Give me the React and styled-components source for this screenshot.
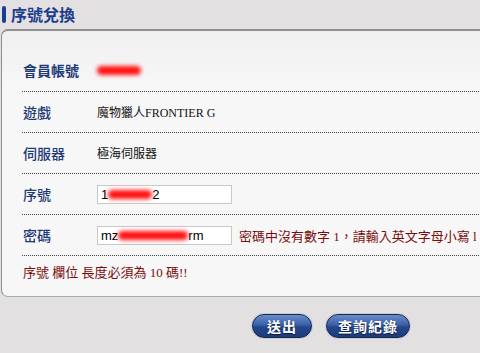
import React from "react";
import styled, { createGlobalStyle } from "styled-components";

const GlobalStyle = createGlobalStyle`
  html, body {
    margin: 0;
    padding: 0;
    background: #e2e0e0;
    font-family: "Liberation Serif", "Noto Sans CJK TC", serif;
    overflow: hidden;
  }
`;

function App() {
  return (
    <Page>
      <GlobalStyle />
      <TitleBar>
        <TitleMark />
        <Title>序號兌換</Title>
      </TitleBar>
      <Panel>
        <Row>
          <Label $strong>會員帳號</Label>
          <Value>
            <Blur $w={44} />
          </Value>
        </Row>
        <Row>
          <Label>遊戲</Label>
          <Value>魔物獵人FRONTIER G</Value>
        </Row>
        <Row>
          <Label>伺服器</Label>
          <Value>極海伺服器</Value>
        </Row>
        <Row>
          <Label>序號</Label>
          <Value>
            <Field>
              1<Blur $w={44} />2
            </Field>
          </Value>
        </Row>
        <Row>
          <Label>密碼</Label>
          <Value>
            <Field>
              mz<Blur $w={70} />rm
            </Field>
            <Hint>密碼中沒有數字 1，請輸入英文字母小寫 l</Hint>
          </Value>
        </Row>
        <ErrorLine>序號 欄位 長度必須為 10 碼!!</ErrorLine>
      </Panel>
      <Actions>
        <PillButton $w={60}>送出</PillButton>
        <PillButton $w={84}>查詢紀錄</PillButton>
      </Actions>
    </Page>
  );
}

const Page = styled.div`
  width: 480px;
  height: 353px;
  padding-top: 5px;
  box-sizing: border-box;
`;

const TitleBar = styled.div`
  display: flex;
  align-items: center;
  gap: 5px;
  padding-left: 2px;
  height: 18px;
`;

const TitleMark = styled.span`
  width: 4px;
  height: 17px;
  border-radius: 2px;
  background: #1b3d8f;
`;

const Title = styled.h1`
  margin: 0;
  font-family: "Noto Sans CJK TC", sans-serif;
  font-size: 16px;
  font-weight: 700;
  color: #1c3d8c;
  line-height: 18px;
`;

const Panel = styled.div`
  margin: 6px -10px 0 1px;
  padding: 20px 0 15px 20px;
  border: 1px solid #8e8e8e;
  border-top-width: 2px;
  border-bottom-color: #a8a8a8;
  border-radius: 7px 0 0 7px;
  background: linear-gradient(#f1f0f0, #f7f7f7 60px);
`;

const Row = styled.div`
  display: grid;
  grid-template-columns: 75px 1fr;
  align-items: center;
  height: 41px;
  border-bottom: 1px dotted #444;
  box-sizing: border-box;
  &:first-child {
    padding-bottom: 2px;
  }
`;

const Label = styled.div`
  padding-left: 1px;
  font-family: "Noto Sans CJK TC", sans-serif;
  font-size: 14px;
  font-weight: ${(p) => (p.$strong ? 700 : 500)};
  color: #1d3a78;
`;

const Value = styled.div`
  display: flex;
  align-items: center;
  gap: 7px;
  font-size: 12px;
  color: #111;
  white-space: nowrap;
`;

const Blur = styled.span`
  display: inline-block;
  width: ${(p) => p.$w}px;
  height: 9px;
  border-radius: 5px;
  background: #ff1010;
  filter: blur(2px);
  vertical-align: middle;
`;

const Field = styled.div`
  width: 135px;
  height: 19px;
  box-sizing: border-box;
  padding: 0 3px;
  display: flex;
  align-items: center;
  background: #fff;
  border: 1px solid #c8c8c8;
  font-family: "Liberation Sans", sans-serif;
  font-size: 13px;
  color: #000;
`;

const Hint = styled.span`
  font-size: 13px;
  color: #7a0c0c;
`;

const ErrorLine = styled.div`
  padding: 6px 0 0 1px;
  font-size: 13px;
  color: #7a0c0c;
`;

const Actions = styled.div`
  display: flex;
  gap: 14px;
  padding: 17px 0 0 252px;
`;

const PillButton = styled.button`
  width: ${(p) => p.$w}px;
  height: 24px;
  padding: 0;
  border-radius: 12px;
  border: 1px solid #17284f;
  box-shadow: 0 0 0 1px #c9cdd8;
  background: linear-gradient(#6a8ecb, #3a5fa6 45%, #23468c 55%, #1d3c7c);
  color: #fff;
  font-family: "Noto Sans CJK TC", sans-serif;
  font-size: 14px;
  font-weight: 700;
  letter-spacing: 1px;
  text-shadow: 0 1px 1px #0c1a3a;
  cursor: pointer;
`;

export default App;
